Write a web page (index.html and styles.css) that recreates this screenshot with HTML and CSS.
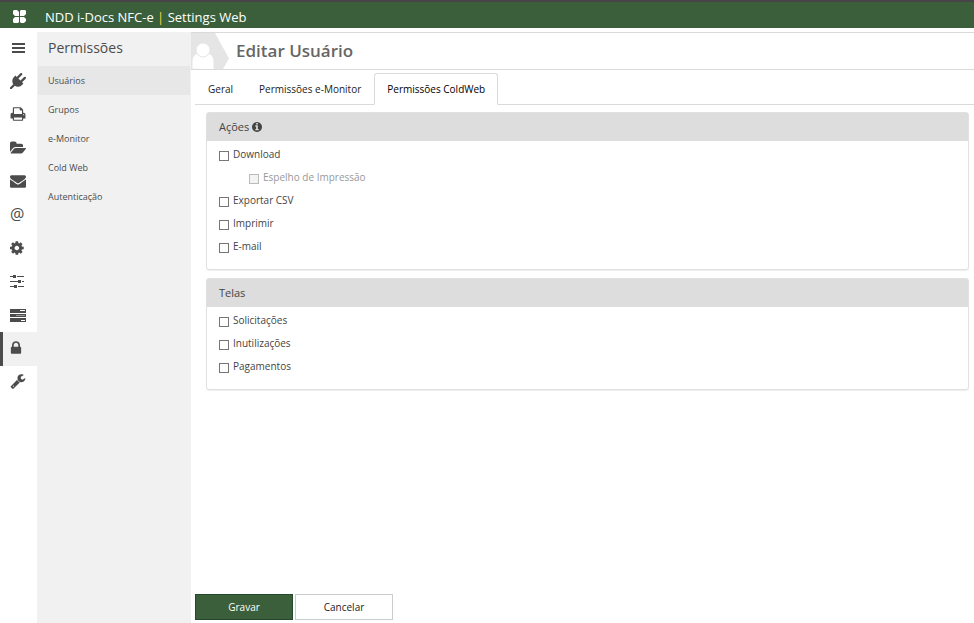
FILE: index.html
```html
<!DOCTYPE html>
<html lang="pt-BR">
<head>
<meta charset="utf-8">
<title>NDD i-Docs NFC-e | Settings Web</title>
<link rel="stylesheet" href="styles.css">
</head>
<body>
<header class="topbar">
  <svg class="logo" viewBox="0 0 13 13" aria-hidden="true"><path d="M0 1l1-1h3l2 2v4H2L0 4zM7 1l1-1h4l1 1v3l-2 2H7zM0 9l2-2h4v5l-1 1H1l-1-1zM7 7h4l2 2v2l-2 2H8l-1-1z"/></svg>
  <span>NDD i-Docs NFC-e <span class="bar">|</span> Settings Web</span>
</header>
<div class="shell">
  <nav class="rail" aria-label="Principal">
    <a href="#" aria-label="Menu"><svg viewBox="0 0 16 16"><path d="M2 3h13v2H2zM2 7h13v2H2zM2 11h13v2H2z"/></svg></a>
    <a href="#" aria-label="Conexões"><svg viewBox="0 0 1792 1792"><path d="M1755 453q37 38 37 90.500t-37 90.500l-401 400 150 150-160 160q-163 163-389.500 186.500t-411.500-100.500l-362 362h-181v-181l362-362q-124-185-100.500-411.500t186.500-389.500l160-160 150 150 400-401q38-37 91-37t90 37 37 90.500-37 90.500l-400 401 234 234 401-400q38-37 91-37t90 37z"/></svg></a>
    <a href="#" aria-label="Impressão"><svg viewBox="0 0 1792 1792"><path d="M448 1536h896v-256h-896v256zm0-640h896v-384h-160q-40 0-68-28t-28-68v-160h-640v640zm1152 64q0-26-19-45t-45-19-45 19-19 45 19 45 45 19 45-19 19-45zm128 0v416q0 13-9.500 22.500t-22.500 9.500h-224v160q0 40-28 68t-68 28h-960q-40 0-68-28t-28-68v-160h-224q-13 0-22.500-9.500t-9.500-22.500v-416q0-79 56.500-135.500t135.500-56.500h64v-544q0-40 28-68t68-28h672q40 0 88 20t76 48l152 152q28 28 48 76t20 88v256h64q79 0 135.500 56.500t56.500 135.500z"/></svg></a>
    <a href="#" aria-label="Pastas"><svg viewBox="0 0 1880 1792"><path d="M1879 952q0 31-31 66l-336 396q-43 51-120.500 86.500t-143.500 35.500h-1088q-34 0-60.500-13t-26.500-43q0-31 31-66l336-396q43-51 120.500-86.500t143.500-35.500h1088q34 0 60.500 13t26.500 43zm-343-344v160h-832q-94 0-197 47.500t-164 119.500l-337 396-5 6q0-4-.5-12.500t-.5-12.500v-960q0-92 66-158t158-66h320q92 0 158 66t66 158v32h544q92 0 158 66t66 158z"/></svg></a>
    <a href="#" aria-label="E-mail"><svg viewBox="0 0 1792 1792"><path d="M1792 710v794q0 66-47 113t-113 47h-1472q-66 0-113-47t-47-113v-794q44 49 101 87 362 246 497 345 57 42 92.500 65.500t94.500 48 110 24.500h2q51 0 110-24.500t94.500-48 92.500-65.500q170-123 498-345 57-39 100-87zm0-294q0 79-49 151t-122 123q-376 261-468 325-10 7-42.500 31t-54 38.500-52 32.500-57.500 27-50 9h-2q-23 0-50-9t-57.500-27-52-32.500-54-38.500-42.500-31q-91-64-262-182.500t-205-142.500q-62-42-117-115.500t-55-136.500q0-78 41.500-130t118.500-52h1472q65 0 112.500 47t47.500 113z"/></svg></a>
    <a href="#" class="at">@</a>
    <a href="#" aria-label="Configurações"><svg viewBox="128 0 1792 1792"><path d="M1152 896q0-106-75-181t-181-75-181 75-75 181 75 181 181 75 181-75 75-181zm512-109v222q0 12-8 23t-20 13l-185 28q-19 54-39 91 35 50 107 138 10 12 10 25t-9 23q-27 37-99 108t-94 71q-12 0-26-9l-138-108q-44 23-91 38-16 136-29 186-7 28-36 28h-222q-14 0-24.500-8.500t-11.500-21.500l-28-184q-49-16-90-37l-141 107q-10 9-25 9-14 0-25-11-126-114-165-168-7-10-7-23 0-12 8-23 15-21 51-66.500t54-70.500q-27-50-41-99l-183-27q-13-2-21-12.500t-8-23.500v-222q0-12 8-23t19-13l186-28q14-46 39-92-40-57-107-138-10-12-10-24 0-10 9-23 26-36 98.500-107.500t94.500-71.500q13 0 26 10l138 107q44-23 91-38 16-136 29-186 7-28 36-28h222q14 0 24.500 8.500t11.500 21.500l28 184q49 16 90 37l142-107q9-9 24-9 13 0 25 10 129 119 165 170 7 8 7 22 0 12-8 23-15 21-51 66.500t-54 70.500q26 50 41 98l183 28q13 2 21 12.500t8 23.500z"/></svg></a>
    <a href="#" aria-label="Ajustes"><svg viewBox="0 0 16 16"><path d="M0 3h3v1H0zM7 3h7v1H7zM3 2h3v3H3zM0 8h8v1H0zM12 8h2v1h-2zM8 7h3v3H8zM0 13h4v1H0zM8 13h6v1H8zM4 12h3v3H4z"/></svg></a>
    <a href="#" aria-label="Tarefas"><svg viewBox="0 0 16 16"><path d="M0 2h16v4H0zM0 7h16v3H0zM0 11h16v4H0z"/><path class="hole" d="M10 3h5v1h-5zM11 13h4v1h-4z"/><path class="half" d="M6 8h9v1H6z"/></svg></a>
    <a href="#" class="active" aria-label="Permissões"><svg viewBox="0 0 1792 1792"><path d="M640 768h512v-192q0-106-75-181t-181-75-181 75-75 181v192zm832 96v576q0 40-28 68t-68 28h-960q-40 0-68-28t-28-68v-576q0-40 28-68t68-28h32v-192q0-184 132-316t316-132 316 132 132 316v192h32q40 0 68 28t28 68z"/></svg></a>
    <a href="#" aria-label="Ferramentas"><svg viewBox="0 0 1792 1792"><path d="M448 1472q0-26-19-45t-45-19-45 19-19 45 19 45 45 19 45-19 19-45zm644-420l-682 682q-37 37-90 37-52 0-91-37l-106-108q-38-36-38-90 0-53 38-91l681-681q39 98 114.500 173.500t173.500 114.500zm634-435q0 39-23 106-47 134-164.500 217.500t-258.500 83.500q-185 0-316.500-131.500t-131.500-316.500 131.500-316.500 316.500-131.500q58 0 121.500 16.500t107.500 46.500q16 11 16 28t-16 28l-293 169v224l193 107q5-3 79-48.500t135.500-81 70.500-35.500q15 0 23.500 10t8.500 25z"/></svg></a>
  </nav>
  <nav class="menu" aria-labelledby="menu-title">
    <h2 id="menu-title">Permissões</h2>
    <a href="#" class="active">Usuários</a>
    <a href="#">Grupos</a>
    <a href="#">e-Monitor</a>
    <a href="#">Cold Web</a>
    <a href="#">Autenticação</a>
  </nav>
  <main class="content">
    <div class="titlebar">
      <svg class="avatar" viewBox="0 0 38 36" aria-hidden="true"><path class="tag" d="M0 0h24l14 25.500-6 10.500H0z"/><path class="person" d="M1 36V28q0-6 6-8 5 4 10 0 6 2 6 8v9z"/><circle class="person" cx="12" cy="17" r="7"/></svg>
      <h1>Editar Usuário</h1>
    </div>
    <div class="tabs" role="tablist">
      <button type="button" role="tab">Geral</button>
      <button type="button" role="tab">Permissões e-Monitor</button>
      <button type="button" role="tab" class="active" aria-selected="true">Permissões ColdWeb</button>
    </div>
    <form class="form">
      <section class="panel">
        <h3>Ações <svg viewBox="128 128 1536 1536" aria-hidden="true"><path d="M1152 1376v-160q0-14-9-23t-23-9h-96v-512q0-14-9-23t-23-9h-320q-14 0-23 9t-9 23v160q0 14 9 23t23 9h96v320h-96q-14 0-23 9t-9 23v160q0 14 9 23t23 9h448q14 0 23-9t9-23zm-128-896v-160q0-14-9-23t-23-9h-192q-14 0-23 9t-9 23v160q0 14 9 23t23 9h192q14 0 23-9t9-23zm640 416q0 209-103 385.500t-279.500 279.500-385.500 103-385.500-103-279.500-279.500-103-385.500 103-385.500 279.500-279.500 385.500-103 385.500 103 279.500 279.500 103 385.500z"/></svg></h3>
        <div class="options">
          <label><input type="checkbox">Download</label>
          <label class="sub"><input type="checkbox" disabled>Espelho de Impressão</label>
          <label><input type="checkbox">Exportar CSV</label>
          <label><input type="checkbox">Imprimir</label>
          <label><input type="checkbox">E-mail</label>
        </div>
      </section>
      <section class="panel">
        <h3>Telas</h3>
        <div class="options">
          <label><input type="checkbox">Solicitações</label>
          <label><input type="checkbox">Inutilizações</label>
          <label><input type="checkbox">Pagamentos</label>
        </div>
      </section>
      <div class="actions">
        <button type="submit" class="primary">Gravar</button>
        <button type="button">Cancelar</button>
      </div>
    </form>
  </main>
</div>
</body>
</html>
```
FILE: styles.css
```css
* { box-sizing: border-box; }
body {
  margin: 0;
  min-height: 100vh;
  display: flex;
  flex-direction: column;
  background: #fff;
  color: #444;
  font: 10px/16px "Open Sans", "Noto Sans", sans-serif;
}
a { color: inherit; text-decoration: none; }
h1, h2, h3 { margin: 0; }
button { font: inherit; color: #222; background: #fff; padding: 0; }

.topbar {
  height: 28px;
  display: flex;
  align-items: center;
  gap: 19px;
  padding: 4px 13px 0;
  border-top: 2px solid #474347;
  background: #3b5f3b;
  color: #fff;
  font-size: 13px;
}
.logo { width: 13px; height: 13px; fill: #fff; margin-top: -2px; }
.bar { color: #f5cf45; }

.shell { flex: 1; display: flex; padding-top: 4px; }
.rail {
  width: 37px;
  height: 367px;
  display: grid;
  grid-auto-rows: 1fr;
}
.rail a {
  display: flex;
  align-items: center;
  padding: 0 0 2px 10px;
  color: #4c4c4c;
}
.rail svg { width: 16px; height: 16px; fill: currentColor; }
.rail .hole { fill: #fff; }
.rail .half { fill: #999; }
.rail .at { font-size: 16px; }
.rail .active {
  padding-left: 5px;
  border-left: 3px solid #4c4c4c;
  background: #f1f1f1;
}

.menu {
  width: 154px;
  display: flex;
  flex-direction: column;
  background: #f1f1f1;
  color: #4c4c4c;
  font-size: 9px;
}
.menu h2 {
  height: 34px;
  padding-left: 11px;
  font-size: 14px;
  font-weight: 500;
  line-height: 32px;
}
.menu a { padding-left: 11px; line-height: 29px; }
.menu .active { margin: 0 1px; padding-left: 10px; background: #e7e7e7; }

.content { flex: 1; min-width: 0; display: flex; flex-direction: column; }
.titlebar {
  height: 38px;
  display: flex;
  align-items: center;
  gap: 7px;
  border: solid #dadada;
  border-width: 1px 0;
}
.avatar { width: 38px; height: 36px; }
.tag { fill: #e5e5e5; }
.person { fill: #fff; stroke: #e5e5e5; }
.titlebar h1 { color: #666; font-size: 17px; font-weight: 600; line-height: 36px; }

.tabs {
  display: flex;
  height: 35px;
  margin-left: 4px;
  padding-top: 3px;
  border-bottom: 1px solid #dadada;
}
.tabs button { border: 1px solid transparent; padding: 0 12px; background: none; }
.tabs .active {
  margin-bottom: -1px;
  border-color: #dadada;
  border-bottom-color: #fff;
  border-radius: 3px 3px 0 0;
  background: #fff;
  color: #000;
}

.form {
  flex: 1;
  display: flex;
  flex-direction: column;
  gap: 8px;
  padding: 7px 5px 3px 15px;
}
.panel {
  border: 1px solid #e0e0e0;
  border-radius: 3px;
  box-shadow: 0 1px 1px #eee;
}
.panel h3 {
  display: flex;
  align-items: center;
  gap: 3px;
  height: 28px;
  padding-left: 12px;
  background: #ddd;
  font-size: 11px;
  font-weight: 400;
}
.panel h3 svg { width: 10px; height: 10px; fill: #444; }
.options { display: flex; flex-direction: column; padding: 2px 12px 11px; }
.options label { display: flex; align-items: center; gap: 4px; line-height: 23px; }
.options .sub { margin-left: 30px; color: #999; }
.options input {
  appearance: none;
  width: 10px;
  height: 10px;
  margin: 2px 0 0;
  border: 1px solid #767676;
  background: #fff;
}
.options input:disabled { border-color: #bbb; background: #f3f3f3; }

.actions { display: flex; gap: 2px; margin: auto 0 0 -11px; }
.actions button { width: 98px; height: 26px; border: 1px solid #ccc; }
.actions .primary { border-color: #24492a; background: #3b5f3b; color: #fff; }
```
